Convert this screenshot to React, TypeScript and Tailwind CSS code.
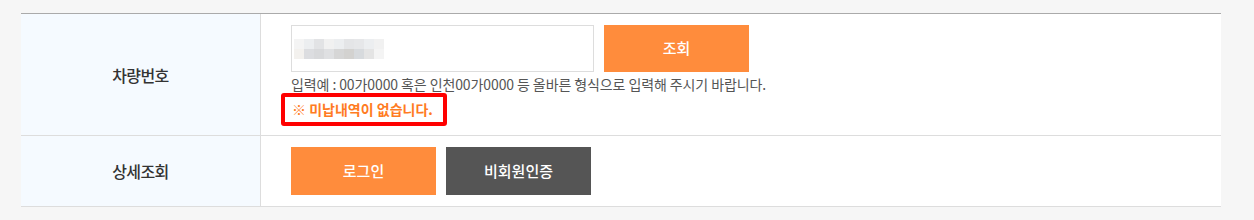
import React from 'react';

const font = { fontFamily: '"Noto Sans CJK KR", "Noto Sans", sans-serif' };

// pixelated (mosaic) plate number in the input
const mosaic = [
  ['#f4f4f4', '#eceef0', '#e2e3e5', '#f1f1f1', '#eceef0', '#e4e5e7', '#e6e7e9', '#eceef0', '#f1f1f1'],
  ['#f3f1ee', '#dcdde0', '#d8d9db', '#dfe0e2', '#d6d6d6', '#d3d2d0', '#d7dadd', '#e4e4e4', '#f4f4f4'],
];

export default function App() {
  return (
    <div className="w-[1254px] h-[220px] bg-[#f6f6f6] pt-[13px] pl-[21px]" style={font}>
      <div className="w-[1200px] border-t border-[#aaaaaa] bg-white">
        {/* 차량번호 */}
        <div className="flex border-b border-[#dddddd]">
          <div className="w-[240px] shrink-0 bg-[#f5faff] border-r border-[#dddddd] flex items-center justify-center">
            <span className="text-[16px] text-[#333333] font-medium tracking-[-0.6px]">차량번호</span>
          </div>
          <div className="flex-1 pl-[30px] pt-[11px] pb-[9px]">
            <div className="flex gap-[10px]">
              <div className="w-[303px] h-[47px] border border-[#dddddd] bg-white flex items-center pl-[2px]">
                <div className="flex flex-col">
                  {mosaic.map((row, i) => (
                    <div key={i} className="flex">
                      {row.map((c, j) => (
                        <div key={j} className="w-[10px] h-[10px]" style={{ backgroundColor: c }} />
                      ))}
                    </div>
                  ))}
                </div>
              </div>
              <button className="w-[145px] h-[47px] bg-[#ff8c3c] text-white text-[15px] font-medium">조회</button>
            </div>
            <p className="mt-[3px] text-[14px] leading-[18px] text-[#555555] tracking-[-0.1px]">
              입력예 : 00가0000 혹은 인천00가0000 등 올바른 형식으로 입력해 주시기 바랍니다.
            </p>
            <div className="-ml-[10px] inline-flex items-center h-[33px] w-[166px] border-4 border-[#ff0000] rounded-[3px] pl-[7px]">
              <span className="text-[14px] font-bold text-[#ff7b22]">※ 미납내역이 없습니다.</span>
            </div>
          </div>
        </div>
        {/* 상세조회 */}
        <div className="flex border-b border-[#dddddd]">
          <div className="w-[240px] shrink-0 bg-[#f5faff] border-r border-[#dddddd] flex items-center justify-center">
            <span className="text-[16px] text-[#333333] font-medium tracking-[-0.6px]">상세조회</span>
          </div>
          <div className="flex-1 pl-[30px] py-[11px] flex gap-[10px]">
            <button className="w-[145px] h-[48px] bg-[#ff8c3c] text-white text-[15px] font-medium">로그인</button>
            <button className="w-[145px] h-[48px] bg-[#555555] text-white text-[15px] font-medium">비회원인증</button>
          </div>
        </div>
      </div>
    </div>
  );
}
